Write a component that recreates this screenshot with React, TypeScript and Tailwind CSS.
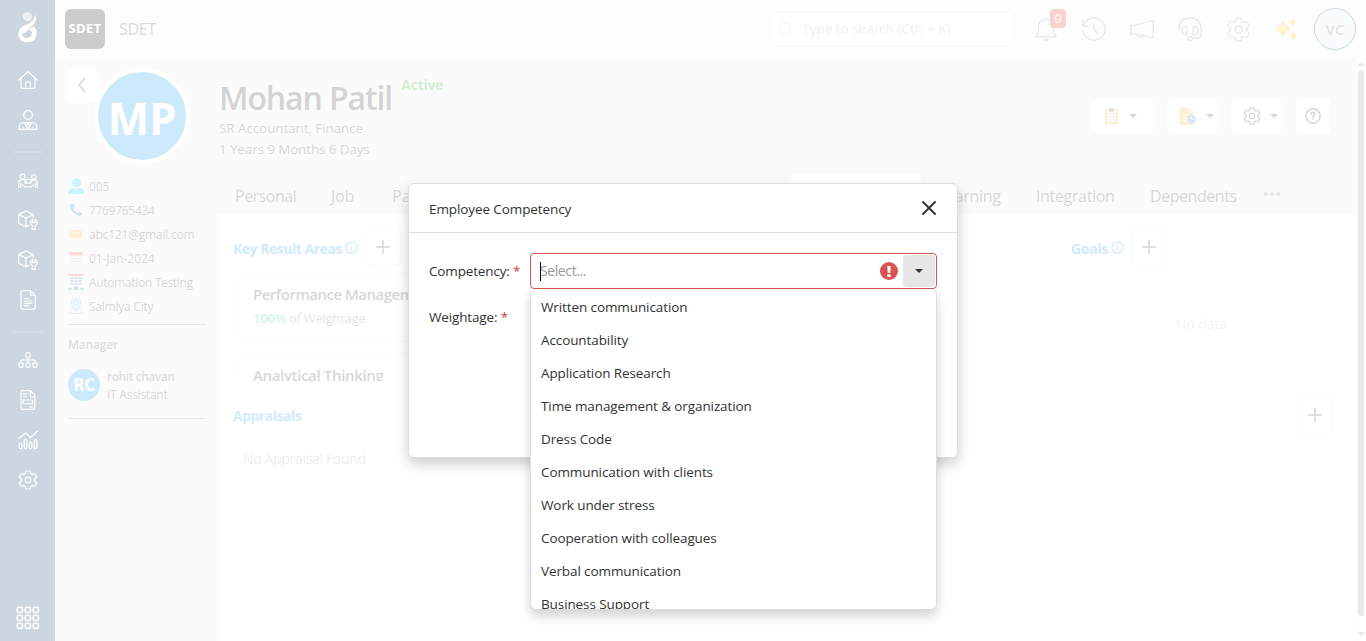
import React from "react";

type P = { d?: string; children?: React.ReactNode; size?: number; vb?: number; sw?: number; className?: string };

function Icon({ d, children, size = 20, vb = 20, sw = 1.2, className = "" }: P) {
  return (
    <svg width={size} height={size} viewBox={`0 0 ${vb} ${vb}`} fill="none" stroke="currentColor" strokeWidth={sw} strokeLinecap="round" strokeLinejoin="round" className={`shrink-0 ${className}`}>
      {d && <path d={d} />}
      {children}
    </svg>
  );
}

const GEAR =
  "M8.6 1h2.800q.7 0 .8.700l.4 1.800 1.600.9 1.900-.6q.7-.2 1 .4l1.300 2.300q.3.600-.2 1L16.700 8.900v2.200l1.500 1.400q.5.400.2 1l-1.300 2.300q-.3.600-1 .4l-1.900-.6-1.600.9-.4 1.800q-.1.700-.8.700H8.600q-.7 0-.8-.7l-.4-1.800-1.600-.9-1.900.6q-.7.200-1-.4l-1.300-2.300q-.3-.6.2-1l1.500-1.400V8.900L1.800 7.500q-.5-.4-.2-1l1.300-2.300q.3-.6 1-.4l1.900.6 1.600-.9.4-1.800q.1-.7.8-.7z";

function Gear({ size = 20, sw = 1.2, r = 2.8 }: { size?: number; sw?: number; r?: number }) {
  return (
    <Icon size={size} sw={sw} d={GEAR}>
      <circle cx="10" cy="10" r={r} />
    </Icon>
  );
}

const BoxTool = () => (
  <Icon sw={1.2}>
    <path d="M10.800 15.400 8 16.800.7 13.200V4.600L8 .9l7.200 3.700v3.200M.7 4.600 8 8.200l7.200-3.600M8 8.200v8.600" />
    <path d="M14.200 19.300v-4.100q-1.800-.9-1.800-2.900 0-2.100 2-3v3.300H17V9.300q2.300.9 2.300 3 0 2-2 2.900v4.100z" />
  </Icon>
);

function SideItem({ children }: { children: React.ReactNode }) {
  return <div className="flex h-10 items-center justify-center pl-px">{children}</div>;
}

function Divider() {
  return (
    <div className="flex h-5 items-center justify-center pt-1">
      <div className="h-0.5 w-[30px] bg-white/15" />
    </div>
  );
}

function Sidebar() {
  return (
    <aside className="flex w-[55px] shrink-0 flex-col bg-[#003265] text-white">
      <div className="flex h-[60px] justify-center pt-3 pl-px">
        <svg width="20" height="31" viewBox="0 0 20 31" className="shrink-0">
          <circle cx="9.500" cy="4.600" r="4.600" fill="#fff" opacity="0.62" />
          <path fill="#fff" fillRule="evenodd" d="M17.200 2.300c1.200 4.800.7 8-2 10.600-1.800 1.700-4.700 2.800-6.700 4.100 2.900-.6 5-1.200 7.300-2.800 3.600 3.400 3.400 9.500.7 13-3.500 4-10.200 4.100-13.700.8C-.9 24.300 0 18.800 3 15.800c3-2.900 7.600-3.400 10.600-6.100 1.900-1.700 3.100-4.200 3.600-7.400zM4.300 20.600c-.5 3 1 5.400 4.200 5.500 3.500.1 5.600-2.500 5.500-5.200-.1-2-1.400-3.200-3-2.900-2 .4-3 2.700-5.300 3.200-.6.100-1-.1-1.400-.6z" />
        </svg>
      </div>
      <SideItem>
        <Icon d="M.8 10 10 1.600 19.200 10 M3 8.500V16.500Q3 18.500 5 18.500H15Q17 18.500 17 16.500V8.500 M7.600 18.300V12h4.800v6.300" />
      </SideItem>
      <SideItem>
        <Icon>
          <circle cx="10" cy="5" r="4.300" />
          <path d="M1.300 19.300v-2.500Q1.300 12.800 6 12.500h8q4.700.3 4.700 4.300v2.500zM6.300 12.500l3.700 6.500 3.700-6.500M8.600 12.800l1.400 2.400 1.400-2.400M5 17v2M15 17v2" />
        </Icon>
      </SideItem>
      <Divider />
      <div className="flex h-10 items-center justify-center pt-[2px] pl-px">
        <Icon sw={1.1}>
          <circle cx="4.600" cy="5.600" r="2.500" />
          <circle cx="15.800" cy="6" r="2.300" />
          <path d="M.7 16.500v-4Q.8 9.200 3.500 8.700h2L9 12M2.700 16.500v-4M19.300 16.500v-4q-.1-3.300-2.800-3.500h-1.600L11.500 12M17.600 16.500v-4M3 13l4 2.800h6.500l3.500-3M7.200 8.500h5.600v3.700H7.200zM7.500 15.800v.7M12.600 15.800v.7" />
        </Icon>
      </div>
      <SideItem><BoxTool /></SideItem>
      <SideItem><BoxTool /></SideItem>
      <SideItem>
        <Icon d="M5 .7h7.500L17.200 5.400V17.300q0 2-2 2H5q-2 0-2-2V2.700q0-2 2-2zM12.500.7V5.400h4.700M6.300 8.700h4M6.300 11h7.600M6.300 13.300h7.600M6.300 15.600h5" />
      </SideItem>
      <Divider />
      <SideItem>
        <Icon>
          <circle cx="10" cy="5" r="2.500" />
          <circle cx="3" cy="15" r="2.300" />
          <circle cx="10" cy="15" r="2.300" />
          <circle cx="17" cy="15" r="2.300" />
          <path d="M10 7.500v5.200M3 12.700V11q0-1 1-1h12q1 0 1 1v1.700" />
        </Icon>
      </SideItem>
      <SideItem>
        <Icon d="M4.500.7h8L16.800 5V17.800q0 1.500-1.500 1.500H4.500Q3 19.300 3 17.800V2.200Q3 .7 4.500.7zM12.500.7V7h4.300M5.500 3.800h3M5.500 6.500h3M5 10h9.500v3.600H5zM11.500 16.800h3" />
      </SideItem>
      <SideItem>
        <Icon>
          <path d="M.7 8.500 7.500 3l5 4.500L19.300 1.300" />
          <rect x="1.200" y="13" width="2.600" height="5.600" rx="1.300" />
          <rect x="6.200" y="9.500" width="2.600" height="9.100" rx="1.300" />
          <rect x="11.200" y="12" width="2.600" height="6.600" rx="1.300" />
          <rect x="16.200" y="9.500" width="2.600" height="9.100" rx="1.300" />
        </Icon>
      </SideItem>
      <SideItem><Gear /></SideItem>
      <div className="mt-auto flex justify-center pb-[11px]">
        <svg width="24" height="24" viewBox="0 0 24 24" fill="none" stroke="#fff" strokeWidth="1.600" className="shrink-0">
          {[1.300, 9.300, 17.300].map((y) =>
            [1.300, 9.300, 17.300].map((x) => <rect key={`${x}-${y}`} x={x} y={y} width="5.200" height="5.200" rx="1.600" />)
          )}
        </svg>
      </div>
    </aside>
  );
}

function HeaderIcon({ children }: { children: React.ReactNode }) {
  return <div className="relative flex w-12 items-center justify-center text-[#8c8c8c]">{children}</div>;
}

function Header() {
  return (
    <header className="flex h-[58px] shrink-0 items-center bg-[#f5f5f5] pr-[10px] pl-[10px]">
      <div className="flex h-10 w-10 items-center justify-center rounded-md bg-black text-[13px] font-bold text-white">
        <span className="tracking-[0.4px]">SDET</span>
      </div>
      <div className="ml-[14px] text-base font-medium tracking-[-0.3px] text-[#444]">SDET</div>
      <div className="ml-auto flex h-9 w-[249px] items-center rounded-lg border-2 border-[#ececec] bg-white pl-2 text-[#b5b5b5]">
        <Icon size={16} vb={16} sw={1}>
          <circle cx="6.800" cy="6.800" r="5.800" />
          <path d="m11 11 4 4" />
        </Icon>
        <span className="ml-2 text-sm tracking-[-0.22px]">Type to search (Ctrl + K)</span>
      </div>
      <div className="ml-[5px] flex h-full">
        <HeaderIcon>
          <Icon size={24} vb={24} d="M12 2.300V.8M4.500 16V11q0-8.700 7.500-8.700T19.500 11v5l2.500 3v.800H2V19zM9.800 22.300q2.200 2 4.400 0" />
          <span className="absolute top-[9px] left-[28px] flex h-[19px] w-4 items-center justify-center rounded bg-[#e02020] text-xs text-white">0</span>
        </HeaderIcon>
        <HeaderIcon><Icon size={24} vb={24} d="M.8 2.500V9h6.500M1 9Q4.500 1 12 .8a11.200 11.200 0 1 1-11 13M12 7v5.500l3.500 4" /></HeaderIcon>
        <HeaderIcon><Icon size={24} vb={24} d="M.8 7v11M.8 9 23.200 3.500v17L.8 16M7 17.500q.3 3 3.500 3t3.500-2.500" /></HeaderIcon>
        <HeaderIcon>
          <Icon size={24} vb={24}>
            <path d="M.800 14V11.500Q1.500.800 12 .800t11.200 10.700V18q0 3.200-3.500 3.200H15.500" />
            <path d="M8.800 9.500H6.500q-2.500 0-2.500 4t2.500 4h2.300zM15.200 9.500h2.300q2.500 0 2.500 4t-2.500 4h-2.300z" />
            <rect x="9.500" y="19.800" width="6" height="3.400" rx="1.700" />
          </Icon>
        </HeaderIcon>
        <HeaderIcon><Gear size={25} sw={1} /></HeaderIcon>
        <HeaderIcon>
          <svg width="24" height="24" viewBox="0 0 24 24" fill="#ffc20e" className="shrink-0">
            <path d="M9 3q2 7 9 9-7 2-9 9-2-7-9-9 7-2 9-9zM19.300 0q1.100 3.700 4.700 4.800-3.600 1.100-4.700 4.700-1.100-3.600-4.700-4.700Q18.200 3.700 19.300 0zM19.300 14.500q1.100 3.700 4.700 4.800-3.600 1.100-4.700 4.700-1.100-3.600-4.700-4.700 3.600-1.100 4.700-4.800z" />
          </svg>
        </HeaderIcon>
      </div>
      <div className="ml-[4px] flex h-[42px] w-[42px] items-center justify-center rounded-full border border-[#003265] bg-[#dfefff] pt-px text-[15px] font-semibold text-[#707b85]">VC</div>
    </header>
  );
}

const details: { icon: React.ReactNode; text: string; cls: string }[] = [
  {
    text: "005", cls: "tracking-[-0.1px]",
    icon: <svg width="16" height="16" viewBox="0 0 16 16" fill="#00c8f0"><circle cx="8.500" cy="4.800" r="4.600" /><path d="M0 16v-2.500Q.5 10.500 5 10l3.500 1L12 10q3.500.5 4 3.500V16z" /></svg>,
  },
  {
    text: "7769765434", cls: "tracking-[-0.3px]",
    icon: <svg width="16" height="16" viewBox="0 0 16 16" fill="#1976e8"><path d="M3.500 2 5.500 1.800 7 5.500 5.500 7q1 2.500 3.800 4L11 9.500l3.200 1.800q-.1 2.500-2.200 2.800Q9 14 5.500 10.800T2 4.500Q2 2.800 3.500 2z" /></svg>,
  },
  {
    text: "abc121@gmail.com", cls: "tracking-[-0.2px]",
    icon: <svg width="16" height="16" viewBox="0 0 16 16"><path fill="#ffab1a" d="M2 4h12v8.500H2z" /><path d="m3 5 5 3.500L13 5" stroke="#fff" fill="none" /></svg>,
  },
  {
    text: "01-Jan-2024", cls: "tracking-[-0.05px]",
    icon: <svg width="16" height="16" viewBox="0 0 16 16"><path fill="#dde2e8" d="M2 5h12v9H2z" /><path fill="#ff4030" d="M1.500 2h13v3.500h-13z" /><path d="M4 8.500h8M4 11h8" stroke="#9aa" /></svg>,
  },
  {
    text: "Automation Testing", cls: "tracking-[-0.32px]",
    icon: <svg width="16" height="16" viewBox="0 0 16 16"><path fill="#ff3b30" d="M0 0h16v2H0z" /><path fill="#dce4ea" d="M2 2h12v14H2z" /><path d="M2.500 4h11M2.500 7h11M2.500 10h11" stroke="#276a96" strokeWidth="1.400" strokeDasharray="3 1" /><path fill="#3ba876" d="M0 14h4v2H0zM12 14h4v2h-4z" /><path fill="#456" d="M6 12.500h4V16H6z" /></svg>,
  },
  {
    text: "Salmiya City", cls: "tracking-[-0.22px]",
    icon: <svg width="16" height="16" viewBox="0 0 16 16" stroke="#6ba0c8" fill="none"><path d="m4 10.500-3 5h14l-3-5" stroke="#9aaab5" /><path fill="#aadcf8" d="M8 13.500Q3.500 9 3.500 5a4.500 4.500 0 0 1 9 0Q12.500 9 8 13.500z" /><circle cx="8" cy="5" r="2" fill="#fff" /></svg>,
  },
];

function EmployeePanel() {
  return (
    <section className="w-[163px] shrink-0 pt-[10px] text-[#333]">
      <div className="flex pl-[10px]">
        <div className="flex h-[34px] w-[34px] items-center justify-center rounded-lg bg-white text-[#333]">
          <Icon size={14} vb={14} sw={1.500} d="M9.500.8 4 7l5.500 6.200" />
        </div>
        <div className="-ml-[5px] flex h-24 w-24 items-center justify-center rounded-full border-4 border-white bg-[#0097ea] pt-[3px] text-[44px] font-bold text-white">
          <span className="tracking-[-0.3px]">MP</span>
        </div>
      </div>
      <div className="mt-[10px] mr-3 ml-[13px] border-b border-[#8a8a8a] pb-[6px]">
        {details.map((d) => (
          <div key={d.text} className="flex h-6 items-center gap-[5px] text-xs whitespace-nowrap">
            {d.icon}
            <span className={`pt-px ${d.cls}`}>{d.text}</span>
          </div>
        ))}
      </div>
      <div className="mr-3 ml-[13px] h-[94px] border-b border-[#8a8a8a] pt-3">
        <div className="text-xs leading-4 font-semibold tracking-[-0.2px] text-[#555]">Manager</div>
        <div className="mt-[13px] flex items-center gap-[7px]">
          <div className="flex h-8 w-8 items-center justify-center rounded-full bg-[#0097ea] text-[17px] font-bold tracking-[-0.3px] text-white">RC</div>
          <div className="pt-[2px] text-xs leading-[18px]">
            <div className="font-semibold tracking-[-0.45px] text-[#555]">rohit chavan</div>
            <div className="tracking-[-0.25px]">IT Assistant</div>
          </div>
        </div>
      </div>
    </section>
  );
}

function Caret({ className = "" }: { className?: string }) {
  return <svg width="8" height="4" viewBox="0 0 8 4" className={`shrink-0 ${className}`}><path d="M0 0h8L4 4z" fill="currentColor" /></svg>;
}

const btn = "flex h-9 items-center rounded border border-[#e4e4e4] bg-white text-[#333]";

function ProfileHeader() {
  return (
    <div className="h-[156px] text-[#333]">
      <div className="flex h-[116px] justify-between pr-[25px]">
        <div className="pt-[18px] pl-px">
          <div className="flex items-start">
            <h1 className="h-[42px] text-[32px] leading-[44px] font-semibold tracking-[-1.1px] text-[#222]">Mohan Patil</h1>
            <span className="ml-[9px] text-sm leading-[18px] font-bold tracking-[-0.2px] text-[#29a329]">Active</span>
          </div>
          <div className="text-[13.500px] leading-[21px]">
            <div className="tracking-[-0.1px]">SR Accountant, Finance</div>
            <div className="tracking-[-0.14px]">1 Years 9 Months 6 Days</div>
          </div>
        </div>
        <div className="flex gap-[10px] pt-10">
          <div className={`${btn} w-[66px] gap-3 pl-[13px]`}>
            <svg width="16" height="18" viewBox="0 0 16 18" className="shrink-0"><path fill="#ffb020" d="M1 2h13v15H1z" /><path fill="#fff" d="M3.500 3h8v12h-8z" /><path fill="#777" d="M5 1h5v4H5z" /><path d="M4 7h7M4 10h7M4 13h7" stroke="#888" /></svg>
            <Caret className="-ml-[3px]" />
          </div>
          <div className={`${btn} w-[54px] pl-3`}>
            <svg width="17" height="18" viewBox="0 0 17 18" className="shrink-0"><path fill="#ffb020" d="M1 0h8l5 5v13H1z" /><path d="M9 0v5h5M3 8h6M3 11h6M3 14h5" stroke="#fff" fill="none" /><circle cx="12.500" cy="12" r="4.500" fill="#2b8cef" /><path d="M12.500 9.500V12H15" stroke="#fff" fill="none" /></svg>
            <Caret className="ml-[10px]" />
          </div>
          <div className={`${btn} w-[54px] pl-3`}>
            <Gear size={18} sw={1.400} />
            <Caret className="ml-[9px]" />
          </div>
          <div className={`${btn} ml-px w-9 justify-center`}>
            <Icon size={16} vb={16} sw={1.500}><circle cx="8" cy="8" r="7.200" /><path d="M6 6.300q.1-2 2-2t2 1.700Q10 7.200 8 8.200v1.200M8 11.400v.200" /></Icon>
          </div>
        </div>
      </div>
      <nav className="flex h-10 text-base leading-[45px] whitespace-nowrap">
        <span className="w-24 pl-[17px] tracking-[-0.5px]">Personal</span>
        <span className="w-[61px] pl-[17px] tracking-[-0.2px]">Job</span>
        <span className="w-[413px] pl-[17px]">Payroll</span>
        <span className="w-[134px] shrink-0 rounded-t-lg bg-white" />
        <span className="w-[97px] pl-[16px] tracking-[-0.3px]">Learning</span>
        <span className="w-[114px] pl-[17px] tracking-[-0.35px]">Integration</span>
        <span className="w-[114px] pl-[17px] tracking-[-0.45px]">Dependents</span>
        <span className="flex gap-[2px] pt-[18px] pl-[17px] text-[#777]">
          <i className="h-1 w-1 rounded-full bg-current" />
          <i className="h-1 w-1 rounded-full bg-current" />
          <i className="h-1 w-1 rounded-full bg-current" />
        </span>
      </nav>
    </div>
  );
}

function PlusButton() {
  return (
    <div className="flex h-9 w-9 items-center justify-center rounded border border-[#e0e0e0] text-[#333]">
      <Icon size={14} vb={14} sw={1.500} d="M7 .5v13M.5 7h13" />
    </div>
  );
}

function Heading({ text, className }: { text: string; className: string }) {
  return (
    <div className="flex h-9 items-center">
      <h2 className={`pt-[3px] text-sm font-bold text-[#1195f5] ${className}`}>{text}</h2>
      <Icon size={13} vb={13} sw={1.200} className="mr-[7px] ml-[3px] text-[#1195f5]"><circle cx="6.500" cy="6.500" r="5.700" /><path d="M6.500 6v3.500M6.500 3.500v.200" /></Icon>
      <PlusButton />
    </div>
  );
}

function Content() {
  return (
    <div className="flex-1 bg-white pt-[15px] pr-[25px] pl-[15px]">
      <div className="flex h-[153px] justify-between overflow-hidden border-b border-[#f0f0f0]">
        <div className="w-[400px]">
          <Heading text="Key Result Areas" className="tracking-[-0.48px]" />
          <div className="mt-2 h-[69px] rounded border border-[#ececec] pt-[9px] pl-[19px]">
            <div className="text-[15px] leading-[22px] font-semibold tracking-[-0.5px] whitespace-nowrap text-[#333]">Performance Management</div>
            <div className="mt-[3px] text-[13px] leading-[21px] tracking-[-0.22px] text-[#777]"><b className="font-semibold text-[#00c58e]">100%</b> of Weightage</div>
          </div>
          <div className="mt-[11px] h-[69px] rounded border border-[#ececec] pt-[10px] pl-[19px]">
            <div className="text-[15px] leading-[22px] font-semibold tracking-[-0.35px] text-[#333]">Analytical Thinking</div>
          </div>
        </div>
        <div className="w-[260px]">
          <Heading text="Goals" className="tracking-[-0.3px]" />
          <div className="mt-[50px] pl-px text-center text-sm leading-[18px] tracking-[-0.1px] text-[#c4c4c4]">No data</div>
        </div>
      </div>
      <div className="mt-[15px] -mr-[2px] flex items-center justify-between">
        <h2 className="pt-0.5 text-sm font-bold tracking-[-0.5px] text-[#1195f5]">Appraisals</h2>
        <PlusButton />
      </div>
      <div className="mt-4 ml-[10px] text-sm leading-5 tracking-[-0.33px] text-[#a8a8a8]">No Appraisal Found</div>
    </div>
  );
}

function Scrollbar() {
  return (
    <div className="flex w-[10px] shrink-0 flex-col items-center bg-[#fafafa] pt-1 text-[#8c8c8c]">
      <Caret className="rotate-180" />
      <div className="mt-1 h-[546px] w-[6px] rounded-full bg-[#8c8c8c]" />
      <Caret className="mt-4" />
    </div>
  );
}

const options = ["Written communication", "Accountability", "Application Research", "Time management & organization", "Dress Code", "Communication with clients", "Work under stress", "Cooperation with colleagues", "Verbal communication", "Business Support"];

function CompetencyDialog() {
  return (
    <div className="absolute top-[183px] left-[408px] h-[275px] w-[550px] rounded-md border border-[#ddd] bg-white text-sm text-[#333] shadow-[0_6px_14px_rgba(0,0,0,0.2)]">
      <div className="flex h-[49px] items-center justify-between border-b border-[#ddd] pr-[21px] pl-5">
        <span className="pt-[3px] text-[13.500px] tracking-[-0.1px]">Employee Competency</span>
        <Icon size={14} vb={14} sw={1.900} d="m1 1 12 12M13 1 1 13" />
      </div>
      <div className="flex pt-5 pr-5 pl-5">
        <div className="w-[101px] text-[13.500px] tracking-[-0.15px]">
          <div className="h-[46px] leading-9">Competency:<span className="text-[#d33b3b]"> *</span></div>
          <div className="leading-9">Weightage:<span className="text-[#d33b3b]"> *</span></div>
        </div>
        <div className="relative h-9 w-[407px]">
          <div className="flex h-full items-center rounded border border-[#d9534f] bg-white pr-px pl-[9px]">
            <span className="h-[19px] w-px bg-black" />
            <span className="-ml-px flex-1 tracking-[-0.4px] text-[#999]">Select...</span>
            <span className="mr-[5px] flex h-[18px] w-[18px] items-center justify-center rounded-full bg-[#d9534f]">
              <svg width="4" height="11" viewBox="0 0 4 11"><path fill="#fff" d="M.3 0h3.400l-.4 7H.7zM.3 8.300h3.400V11H.3z" /></svg>
            </span>
            <span className="flex h-8 w-8 items-center justify-center rounded-sm bg-[#e6e6e6]"><Caret /></span>
          </div>
          <ul className="absolute top-9 left-0 h-[321px] w-[407px] overflow-hidden rounded-md border border-t-0 border-[#ddd] bg-white pt-[2px] text-[13.500px] shadow-[0_6px_12px_rgba(0,0,0,0.175)]">
            {options.map((o) => (
              <li key={o} className="h-[33px] pl-[10px] leading-[33px] tracking-[-0.1px]">{o}</li>
            ))}
          </ul>
        </div>
      </div>
    </div>
  );
}

export default function App() {
  return (
    <div className="relative flex h-[641px] w-[1366px] overflow-hidden bg-[#ebebeb] font-['Open_Sans','Noto_Sans',sans-serif]">
      <Sidebar />
      <div className="flex flex-1 flex-col">
        <Header />
        <div className="flex flex-1">
          <EmployeePanel />
          <main className="flex flex-1 flex-col">
            <ProfileHeader />
            <Content />
          </main>
          <Scrollbar />
        </div>
      </div>
      <div className="absolute inset-0 bg-white/80" />
      <CompetencyDialog />
    </div>
  );
}
